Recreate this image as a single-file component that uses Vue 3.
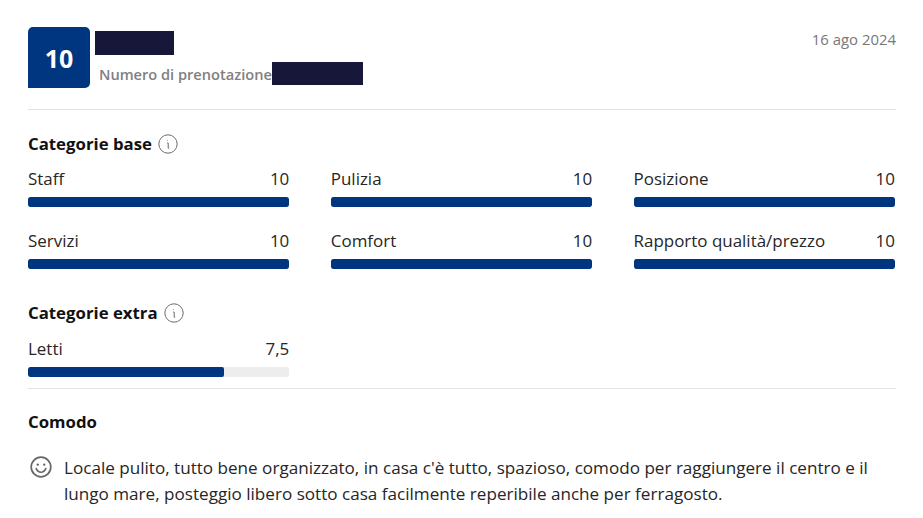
<script setup>
const base = [
  { label: 'Staff', score: '10', pct: 100 },
  { label: 'Pulizia', score: '10', pct: 100 },
  { label: 'Posizione', score: '10', pct: 100 },
  { label: 'Servizi', score: '10', pct: 100 },
  { label: 'Comfort', score: '10', pct: 100 },
  { label: 'Rapporto qualità/prezzo', score: '10', pct: 100 }
]
const extra = [{ label: 'Letti', score: '7,5', pct: 75 }]
</script>

<template>
  <div class="page">
    <header class="head">
      <div class="badge">10</div>
      <div class="who">
        <div class="mask name"></div>
        <div class="ref">
          <span>Numero di prenotazione</span>
          <div class="mask code"></div>
        </div>
      </div>
      <div class="date">16 ago 2024</div>
    </header>

    <section class="base">
      <h3 class="title">Categorie base
        <svg class="info" viewBox="0 0 20 20" fill="none" stroke="#6b6b6b"><circle cx="10" cy="10" r="9.2" stroke-width="1"/><path d="M9.4 6.2v.6M9.2 9h1v5.2h1" stroke-width="1"/></svg>
      </h3>
      <div class="grid">
        <div v-for="c in base" :key="c.label" class="cat">
          <div class="row"><span>{{ c.label }}</span><span>{{ c.score }}</span></div>
          <div class="track"><div class="fill" :style="{ width: c.pct + '%' }"></div></div>
        </div>
      </div>
    </section>

    <section class="extra">
      <h3 class="title">Categorie extra
        <svg class="info" viewBox="0 0 20 20" fill="none" stroke="#6b6b6b"><circle cx="10" cy="10" r="9.2" stroke-width="1"/><path d="M9.4 6.2v.6M9.2 9h1v5.2h1" stroke-width="1"/></svg>
      </h3>
      <div class="grid">
        <div v-for="c in extra" :key="c.label" class="cat">
          <div class="row"><span>{{ c.label }}</span><span>{{ c.score }}</span></div>
          <div class="track"><div class="fill" :style="{ width: c.pct + '%' }"></div></div>
        </div>
      </div>
    </section>

    <section class="review">
      <h3 class="title">Comodo</h3>
      <div class="comment">
        <svg class="smile" viewBox="0 0 22 22" fill="none" stroke="#666"><circle cx="11" cy="11" r="9.8" stroke-width="1.7"/><circle cx="7.8" cy="8.6" r="1.2" fill="#666" stroke="none"/><circle cx="14.2" cy="8.6" r="1.2" fill="#666" stroke="none"/><path d="M6.2 12.6c1 2.4 2.8 3.6 4.8 3.6s3.8-1.2 4.8-3.6" stroke-width="1.6" stroke-linecap="round"/></svg>
        <p>Locale pulito, tutto bene organizzato, in casa c'è tutto, spazioso, comodo per raggiungere il centro e il lungo mare, posteggio libero sotto casa facilmente reperibile anche per ferragosto.</p>
      </div>
    </section>
  </div>
</template>

<style>
body { background: #fff; }
</style>

<style scoped>
.page {
  width: 923px;
  height: 518px;
  box-sizing: border-box;
  padding: 27px 27px 0 28px;
  overflow: hidden;
  font-family: "Open Sans", sans-serif;
  color: #262626;
  font-size: 16.95px;
  background: #fff;
}
.head {
  display: flex;
  height: 82px;
  border-bottom: 1px solid #e3e3e3;
}
.badge {
  width: 62px;
  height: 61px;
  background: #003580;
  color: #fff;
  border-radius: 5px 5px 5px 0;
  display: flex;
  align-items: center;
  justify-content: center;
  font-weight: 700;
  font-size: 25px;
}
.who {
  margin-left: 5px;
  padding-top: 4px;
  flex: 1;
}
.mask { background: #17173a; }
.name { width: 79px; height: 24px; }
.ref {
  display: flex;
  margin-top: 7px;
  padding-left: 4px;
  color: #808080;
  font-weight: 600;
  font-size: 14.6px;
  line-height: 24px;
}
.code { width: 91px; height: 23px; }
.date {
  color: #787878;
  font-size: 14.9px;
  line-height: 24px;
}
.base { padding-top: 22px; }
.extra {
  padding-top: 32px;
  height: 87px;
  border-bottom: 1px solid #e3e3e3;
}
.extra .grid { margin-top: 15px; }
.title {
  margin: 0;
  font-size: 16.8px;
  font-weight: 700;
  color: #111;
  line-height: 24px;
  display: flex;
  align-items: center;
  gap: 6px;
}
.info { width: 20px; height: 20px; }
.grid {
  display: grid;
  grid-template-columns: repeat(3, 261.3px);
  column-gap: 41.5px;
  row-gap: 25px;
  margin-top: 14px;
}
.row {
  display: flex;
  justify-content: space-between;
  line-height: 24px;
  height: 24px;
  margin-bottom: 6px;
  margin-top: -3px;
}
.track {
  height: 10px;
  background: #ededed;
  border-radius: 2px;
  overflow: hidden;
}
.fill {
  height: 100%;
  background: #003580;
  border-radius: 2px;
}
.review { padding-top: 21px; }
.comment {
  display: flex;
  margin-top: 21px;
}
.smile { width: 22px; height: 22px; margin: 1px 0 0 2px; flex: none; }
.comment p {
  margin: 0 0 0 12px;
  font-size: 17.1px;
  line-height: 26px;
  width: 812px;
  color: #262626;
}
</style>
